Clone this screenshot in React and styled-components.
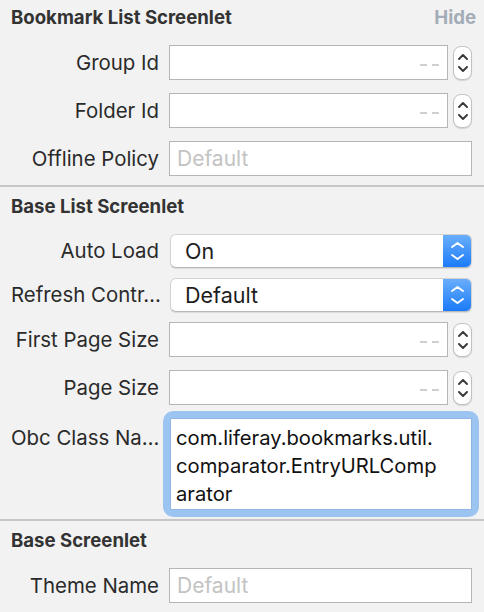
import React from 'react'
import styled, { createGlobalStyle } from 'styled-components'

const Global = createGlobalStyle`
  html, body {
    margin: 0;
    padding: 0;
    background: #f2f2f2;
  }
  body {
    font-family: Inter, "Open Sans", sans-serif;
    -webkit-font-smoothing: antialiased;
  }
`

const Panel = styled.div`
  width: 484px;
  height: 612px;
  overflow: hidden;
  background: #f2f2f2;
`

const Section = styled.div`
  border-top: ${p => (p.$first ? 'none' : '2px solid #c6c6c6')};
  padding: ${p => (p.$first ? '0' : '2px')} 0 9px 0;
`

const Header = styled.div`
  height: 34px;
  display: flex;
  align-items: center;
  justify-content: space-between;
  padding: 0 8px 0 11px;
  font-size: 18.6px;
  font-weight: 700;
  color: #333333;
`

const HideLink = styled.span`
  color: #a4adb7;
  font-weight: 700;
`

const Rows = styled.div`
  padding-top: 11px;
  display: flex;
  flex-direction: column;
`

const Row = styled.div`
  display: grid;
  grid-template-columns: 148px 1fr;
  column-gap: 10px;
  align-items: ${p => (p.$top ? 'start' : 'center')};
  padding: 0 12px 0 11px;
  margin-top: ${p => p.$space || 0}px;
`

const Label = styled.div`
  text-align: right;
  font-size: 20.4px;
  line-height: 24px;
  color: #2a2a2a;
  white-space: nowrap;
  padding-top: ${p => p.$pt || 0}px;
`

const FieldWrap = styled.div`
  display: flex;
  align-items: center;
  gap: 5px;
`

const Field = styled.div`
  flex: 1;
  height: 35px;
  box-sizing: border-box;
  background: #ffffff;
  border: 1px solid #b5b5b5;
  display: flex;
  align-items: center;
  justify-content: ${p => (p.$right ? 'flex-end' : 'flex-start')};
  padding: 0 8px 0 7px;
  font-size: 21px;
  color: #c3c3c3;
`

const Dashes = styled.div`
  display: flex;
  gap: 5px;
  margin-top: 5px;
  & > span {
    width: 7px;
    height: 2px;
    background: #cfcfcf;
  }
`

const Stepper = styled.div`
  width: 19px;
  height: 34px;
  box-sizing: border-box;
  border: 1px solid #c2c2c2;
  border-radius: 8px;
  background: #ffffff;
  box-shadow: 0 1px 1px rgba(0, 0, 0, 0.12);
  display: flex;
  flex-direction: column;
  align-items: center;
  justify-content: center;
  gap: 6px;
`

const Popup = styled.div`
  height: 34px;
  box-sizing: border-box;
  margin-left: 1px;
  display: flex;
  background: #ffffff;
  border: 1px solid #d2d2d2;
  border-bottom-color: #b9b9b9;
  border-radius: 6px;
  box-shadow: 0 1px 1px rgba(0, 0, 0, 0.1);
  overflow: hidden;
`

const PopupText = styled.div`
  flex: 1;
  display: flex;
  align-items: center;
  padding-left: 14px;
  font-size: 21.5px;
  color: #1d1d1d;
`

const PopupArrows = styled.div`
  width: 28px;
  background: linear-gradient(#69aefb, #1b7bf9);
  display: flex;
  flex-direction: column;
  align-items: center;
  justify-content: center;
  gap: 6px;
`

const FocusRing = styled.div`
  margin-left: 1px;
  border-radius: 4px;
  box-shadow: 0 0 0 7px #9cc4f1;
`

const TextArea = styled.div`
  height: 92px;
  box-sizing: border-box;
  background: #ffffff;
  border: 1px solid #8fb6e6;
  padding: 5px 5px;
  font-size: 20.2px;
  line-height: 28px;
  color: #111111;
`

const Line = styled.span`
  display: block;
  white-space: nowrap;
`

const Chevron = ({ up, color = '#3a3a3a', w = 10 }) => (
  <svg width={w} height="6" viewBox={`0 0 ${w} 6`}>
    <path
      d={up ? `M1 5 L${w / 2} 1 L${w - 1} 5` : `M1 1 L${w / 2} 5 L${w - 1} 1`}
      fill="none"
      stroke={color}
      strokeWidth="1.9"
      strokeLinecap="round"
      strokeLinejoin="round"
    />
  </svg>
)

const NumberRow = ({ label, space }) => (
  <Row $space={space}>
    <Label>{label}</Label>
    <FieldWrap>
      <Field $right>
        <Dashes aria-label="--">
          <span />
          <span />
        </Dashes>
      </Field>
      <Stepper>
        <Chevron up />
        <Chevron />
      </Stepper>
    </FieldWrap>
  </Row>
)

const TextRow = ({ label, placeholder, space }) => (
  <Row $space={space}>
    <Label>{label}</Label>
    <Field>{placeholder}</Field>
  </Row>
)

const PopupRow = ({ label, value, space }) => (
  <Row $space={space}>
    <Label>{label}</Label>
    <Popup>
      <PopupText>{value}</PopupText>
      <PopupArrows>
        <Chevron up color="#ffffff" w={13} />
        <Chevron color="#ffffff" w={13} />
      </PopupArrows>
    </Popup>
  </Row>
)

export default function App() {
  return (
    <Panel>
      <Global />
      <Section $first>
        <Header>
          Bookmark List Screenlet
          <HideLink>Hide</HideLink>
        </Header>
        <Rows>
          <NumberRow label="Group Id" />
          <NumberRow label="Folder Id" space={13} />
          <TextRow label="Offline Policy" placeholder="Default" space={13} />
        </Rows>
      </Section>

      <Section>
        <Header>Base List Screenlet</Header>
        <Rows>
          <PopupRow label="Auto Load" value="On" />
          <PopupRow label="Refresh Contr…" value="Default" space={10} />
          <NumberRow label="First Page Size" space={10} />
          <NumberRow label="Page Size" space={13} />
          <Row $top $space={13}>
            <Label $pt={8}>Obc Class Na…</Label>
            <FocusRing>
              <TextArea>
                <Line>com.liferay.bookmarks.util.</Line>
                <Line>comparator.EntryURLComp</Line>
                <Line>arator</Line>
              </TextArea>
            </FocusRing>
          </Row>
        </Rows>
      </Section>

      <Section>
        <Header>Base Screenlet</Header>
        <Rows>
          <TextRow label="Theme Name" placeholder="Default" />
        </Rows>
      </Section>
    </Panel>
  )
}
